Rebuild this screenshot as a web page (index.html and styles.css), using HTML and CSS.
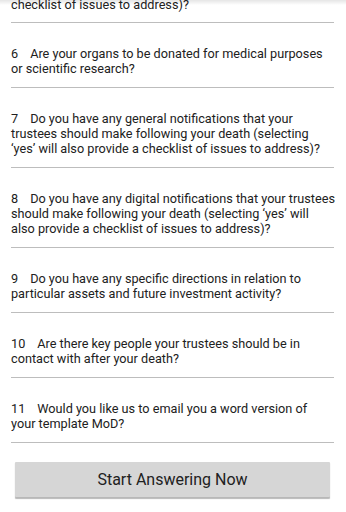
FILE: index.html
```html
<!DOCTYPE html>
<html>
<head>
<meta charset="utf-8">
<link rel="stylesheet" href="styles.css">
</head>
<body>
<div class="screen">
  <div class="topshadow"></div>
  <ul class="questions">
    <li class="q q-partial">checklist of issues to address)?</li>
    <li class="q"><span class="num">6</span>Are your organs to be donated for medical purposes<br>or scientific research?</li>
    <li class="q"><span class="num">7</span>Do you have any general notifications that your<br>trustees should make following your death (selecting<br>‘yes’ will also provide a checklist of issues to address)?</li>
    <li class="q"><span class="num">8</span>Do you have any digital notifications that your trustees<br>should make following your death (selecting ‘yes’ will<br>also provide a checklist of issues to address)?</li>
    <li class="q"><span class="num">9</span>Do you have any specific directions in relation to<br>particular assets and future investment activity?</li>
    <li class="q"><span class="num">10</span>Are there key people your trustees should be in<br>contact with after your death?</li>
    <li class="q"><span class="num">11</span>Would you like us to email you a word version of<br>your template MoD?</li>
  </ul>
  <div class="actions">
    <button class="start">Start Answering Now</button>
  </div>
</div>
</body>
</html>
```
FILE: styles.css
```css
html, body {
  margin: 0;
  padding: 0;
  background: #ffffff;
}
.screen {
  position: relative;
  width: 346px;
  height: 512px;
  overflow: hidden;
  background: #ffffff;
  font-family: Roboto, "Noto Sans", sans-serif;
  color: #212121;
}
.topshadow {
  position: absolute;
  left: 0;
  top: 0;
  width: 100%;
  height: 5px;
  background: linear-gradient(to bottom, rgba(0,0,0,0.10), rgba(0,0,0,0));
  z-index: 2;
}
.questions {
  list-style: none;
  margin: -3px 12px 0 11px;
  padding: 0;
}
.q {
  font-size: 12.7px;
  line-height: 15px;
  padding: 23px 0 11px 0;
  border-bottom: 1px solid #bdbdbd;
  white-space: nowrap;
}
.q-partial {
  padding-top: 0;
  padding-bottom: 10px;
}
.num {
  display: inline-block;
  margin-right: 12px;
}
.actions {
  padding: 19px 16px 0 15px;
}
.start {
  display: block;
  width: 100%;
  height: 35px;
  border: none;
  border-radius: 1px;
  background: #d6d6d6;
  box-shadow: 0 1.5px 1px rgba(0,0,0,0.28);
  font-family: Roboto, "Noto Sans", sans-serif;
  font-size: 16px;
  color: #212121;
  padding: 0;
}
```
